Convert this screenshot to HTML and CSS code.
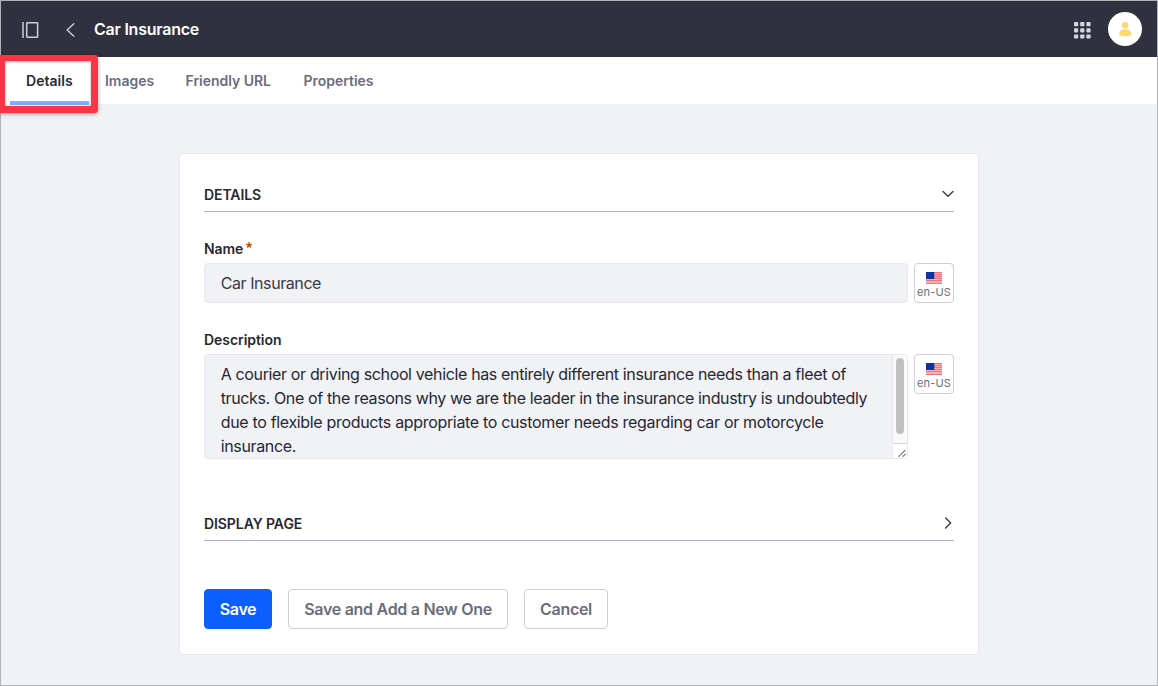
FILE: index.html
```html
<!DOCTYPE html>
<html lang="en">
<head>
<meta charset="utf-8">
<title>Car Insurance</title>
<link rel="stylesheet" href="styles.css">
</head>
<body>
<div class="app">
  <header class="topbar">
    <svg class="icon-panel" width="17" height="16" viewBox="0 0 17 16" fill="none" stroke="#cdced9" stroke-width="1.500"><path d="M1 0v16"/><rect x="4.700" y=".8" width="10.900" height="14.400" rx=".4"/></svg>
    <svg class="icon-back" width="9" height="14" viewBox="0 0 9 14" fill="none" stroke="#cdced9" stroke-width="1.400" stroke-linecap="round"><path d="M7.800.8 1.200 7l6.600 6.200"/></svg>
    <h1 class="title">Car Insurance</h1>
    <svg class="icon-apps" width="17" height="17" viewBox="0 0 17 17" fill="#d5d6e0"><rect width="4.200" height="4.200" rx=".8"/><rect x="6.200" width="4.200" height="4.200" rx=".8"/><rect x="12.400" width="4.200" height="4.200" rx=".8"/><rect y="6.200" width="4.200" height="4.200" rx=".8"/><rect x="6.200" y="6.200" width="4.200" height="4.200" rx=".8"/><rect x="12.400" y="6.200" width="4.200" height="4.200" rx=".8"/><rect y="12.400" width="4.200" height="4.200" rx=".8"/><rect x="6.200" y="12.400" width="4.200" height="4.200" rx=".8"/><rect x="12.400" y="12.400" width="4.200" height="4.200" rx=".8"/></svg>
    <span class="avatar"><svg width="13" height="15" viewBox="0 0 13 15" fill="#ffd76e"><circle cx="6.200" cy="3.300" r="3.200"/><path d="M.2 11.800C.2 9 2.700 7.300 6.200 7.300s6 1.700 6 4.500c0 2-1.500 2.400-6 2.400s-6-.4-6-2.400z"/></svg></span>
  </header>
  <nav class="tabs">
    <a class="tab tab-active">Details<span class="highlight"></span></a>
    <a class="tab tab-images">Images</a>
    <a class="tab tab-url">Friendly URL</a>
    <a class="tab tab-props">Properties</a>
  </nav>
  <main class="card">
    <div class="section-head"><h2>DETAILS</h2>
      <svg width="12" height="12" viewBox="0 0 12 12" fill="none" stroke="#393a4a" stroke-width="1.400" stroke-linecap="round"><path d="M1 3.400 6 8.200l5-4.800"/></svg>
    </div>
    <div class="label label-name">Name<svg class="required" width="6" height="6" viewBox="0 0 6 6" stroke="#b95000" stroke-width="1.400" stroke-linecap="round"><path d="M3 3V.7M3 3 .8 2.300M3 3l2.200-.7M3 3 1.600 5M3 3l1.400 2"/></svg></div>
    <div class="field">
      <div class="input"><span class="value">Car Insurance</span></div>
      <div class="lang"><svg width="16" height="12" viewBox="0 0 16 12"><path fill="#fbb0b4" d="M0 0h16v12H0z"/><path stroke="#ee7580" d="M0 .5h16M0 2.500h16M0 4.500h16M0 6.500h16M0 8.500h16M0 11.500h16"/><path fill="#0a35a2" d="M0 0h8.300v7H0z"/></svg><span>en-US</span></div>
    </div>
    <div class="label label-desc">Description</div>
    <div class="field">
      <div class="textarea">
        <div class="copy">
          <p class="l1">A courier or driving school vehicle has entirely different insurance needs than a fleet of</p>
          <p class="l2">trucks. One of the reasons why we are the leader in the insurance industry is undoubtedly</p>
          <p class="l3">due to flexible products appropriate to customer needs regarding car or motorcycle</p>
          <p class="l4">insurance.</p>
        </div>
        <div class="scroll">
          <div class="track"><div class="thumb"></div></div>
          <div class="grip"><svg width="10" height="10" viewBox="0 0 10 10" stroke="#747474" stroke-width="1.100"><path d="m1.500 8.800 7-7M5.500 8.800l3-3"/></svg></div>
        </div>
      </div>
      <div class="lang"><svg width="16" height="12" viewBox="0 0 16 12"><path fill="#fbb0b4" d="M0 0h16v12H0z"/><path stroke="#ee7580" d="M0 .5h16M0 2.500h16M0 4.500h16M0 6.500h16M0 8.500h16M0 11.500h16"/><path fill="#0a35a2" d="M0 0h8.300v7H0z"/></svg><span>en-US</span></div>
    </div>
    <div class="section-head section-display"><h2>DISPLAY PAGE</h2>
      <svg width="12" height="12" viewBox="0 0 12 12" fill="none" stroke="#393a4a" stroke-width="1.400" stroke-linecap="round"><path d="m3.600 1 5 5-5 5"/></svg>
    </div>
    <div class="actions">
      <button class="btn btn-primary">Save</button>
      <button class="btn btn-add">Save and Add a New One</button>
      <button class="btn btn-cancel">Cancel</button>
    </div>
  </main>
</div>
</body>
</html>
```
FILE: styles.css
```css
* { box-sizing: border-box; }
body { margin: 0; font-family: Inter, "Liberation Sans", sans-serif; color: #272833; }
h1, h2, p { margin: 0; }
svg { display: block; flex: none; }
.app { width: 1158px; height: 686px; padding: 1px; box-shadow: inset 0 0 0 1px #b1b2b9; background: #f1f2f5; overflow: hidden; position: relative; }
.topbar { height: 56px; background: #30313f; display: flex; align-items: center; padding: 0 15px 0 21px; }
.icon-panel { margin-top: 2px; }
.icon-back { margin: 2px 0 0 27px; }
.title { margin: 0 auto 0 19px; color: #fff; font-size: 16px; font-weight: 600; line-height: 24px; letter-spacing: -.24px; white-space: nowrap; }
.icon-apps { margin: 2px 17px 0 0; }
.avatar { width: 34px; height: 34px; border-radius: 50%; background: #fff; display: flex; align-items: center; justify-content: center; }
.tabs { height: 47px; background: #fff; display: flex; align-items: flex-start; padding-left: 9px; }
.tab { height: 47px; padding: 0 16px; font-size: 14px; font-weight: 600; line-height: 48px; letter-spacing: -.02px; color: #6b6c7e; white-space: nowrap; position: relative; }
.tab-active { height: 48px; color: #272833; width: 79px; letter-spacing: .03px; box-shadow: inset 0 -4px #80acff; }
.tab-images { width: 80.500px; }
.tab-url { width: 118px; }
.highlight { position: absolute; left: -12px; top: -2px; width: 100px; height: 58px; border: 7px solid #fb3446; border-top-width: 6px; border-radius: 3px; box-shadow: 0 1px 4px rgba(0,0,0,.35), inset 0 1px 3px rgba(0,0,0,.3); }
.card { width: 800px; height: 501.500px; margin: 49px 0 0 178px; border: 1px solid #e7e7ed; border-radius: 4px; background: #fff; padding: 29px 24px 0; }
.section-head { height: 29px; border-bottom: 1px solid #b3b2ca; display: flex; justify-content: space-between; padding-top: 4px; }
.section-head h2 { font-size: 14px; font-weight: 600; line-height: 16px; letter-spacing: -.08px; }
.section-head svg { margin-top: 1px; }
.label { font-size: 14px; font-weight: 600; line-height: 21px; height: 25px; letter-spacing: -.05px; display: flex; }
.label-name { margin-top: 26px; }
.required { margin: 4px 0 0 3px; }
.label-desc { margin-top: 26px; }
.field { display: flex; gap: 6px; align-items: flex-start; }
.input { width: 704px; height: 40px; border: 1px solid #e7e7ed; border-radius: 4px; background: #f1f2f5; padding: 0 15.700px; font-size: 16px; line-height: 39px; color: #393a4a; letter-spacing: -.42px; }
.lang { width: 40px; height: 40px; border: 1px solid #cdced9; border-radius: 4px; background: #fff; display: flex; flex-direction: column; align-items: center; padding-top: 8px; font-size: 11px; line-height: 12px; color: #6b6c7e; letter-spacing: .15px; white-space: nowrap; }
.lang span { margin-top: 2px; }
.textarea { width: 704px; height: 105px; border: 1px solid #e7e7ed; border-radius: 4px; background: #f1f2f5; display: flex; overflow: hidden; }
.copy { width: 687px; padding: 7px 0 0 15.700px; font-size: 16px; line-height: 24px; color: #272833; letter-spacing: -.355px; white-space: nowrap; }
.l2 { letter-spacing: -.365px; }
.l3 { letter-spacing: -.33px; }
.scroll { width: 15px; background: #fafafa; border-left: 1px solid #e8e8e8; }
.track { height: 88px; padding: 3px 0 0 3px; }
.thumb { width: 8px; height: 76px; border-radius: 4px; background: #c1c1c1; }
.grip { height: 15px; border-top: 1px solid #d5d5d5; background: #fff; padding: 4px 0 0 4px; }
.section-display { margin-top: 53px; }
.actions { display: flex; gap: 16px; margin-top: 48px; }
.btn { height: 40px; border: 1px solid #cdced9; border-radius: 4px; background: #fff; color: #6b6c7e; font: 600 16px/24px Inter, "Liberation Sans", sans-serif; letter-spacing: -.28px; padding: 0; white-space: nowrap; }
.btn-primary { width: 68px; border-color: #0b5fff; background: #0b5fff; color: #fff; letter-spacing: -.35px; }
.btn-add { width: 220px; }
.btn-cancel { width: 84px; }
```
